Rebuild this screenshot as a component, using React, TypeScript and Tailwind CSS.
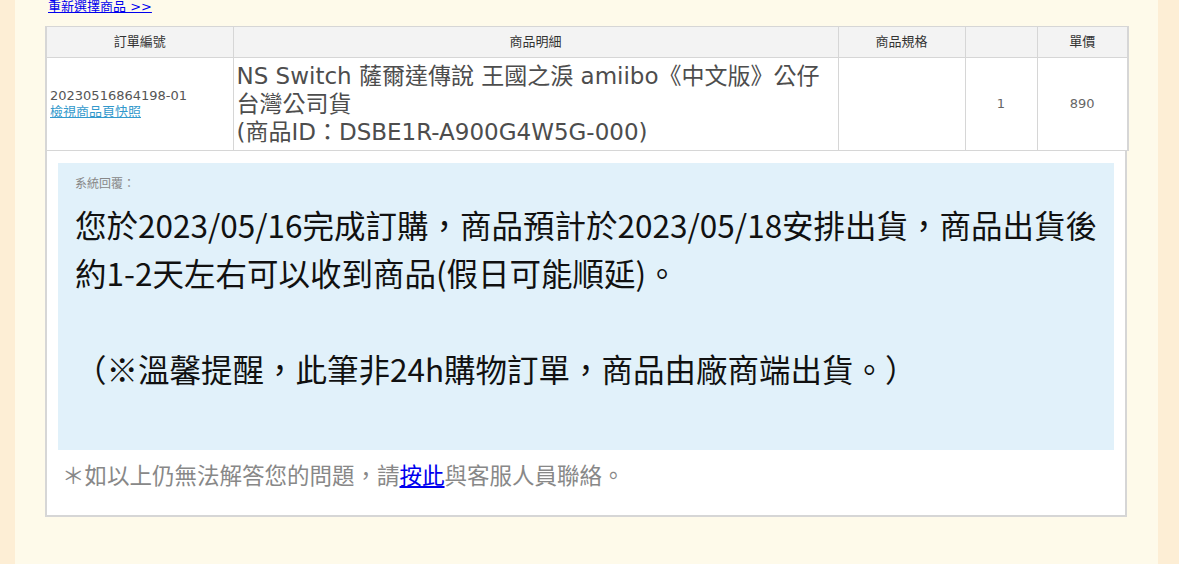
export default function App() {
  const cjk = '"DejaVu Sans", "Noto Sans CJK TC", sans-serif';
  return (
    <div className="flex min-h-[564px] w-[1179px] overflow-hidden bg-[#fdeed5]">
      <div className="ml-[15px] w-[1143px] bg-[#fefaea] pl-[30px]" style={{ fontFamily: cjk }}>
        <a href="#" className="mt-[-1px] ml-[3px] block text-[13px] leading-[16px] text-[#0000ee] underline">
          重新選擇商品 &gt;&gt;
        </a>

        <table className="mt-[11px] w-[1082px] table-fixed border-collapse border-x-2 border-[#d6d6d6] text-[13px]">
          <colgroup>
            <col className="w-[187px]" />
            <col className="w-[605px]" />
            <col className="w-[127px]" />
            <col className="w-[72px]" />
            <col className="w-[91px]" />
          </colgroup>
          <thead>
            <tr className="h-[31px] bg-[#f3f3f3] text-[#333]">
              <th className="border border-[#d6d6d6] font-normal">訂單編號</th>
              <th className="border border-[#d6d6d6] font-normal">商品明細</th>
              <th className="border border-[#d6d6d6] font-normal">商品規格</th>
              <th className="border border-[#d6d6d6] font-normal"></th>
              <th className="border border-[#d6d6d6] font-normal">單價</th>
            </tr>
          </thead>
          <tbody className="bg-white">
            <tr className="h-[93px]">
              <td className="border border-[#d6d6d6] px-[3px] align-middle leading-[16px] text-[#555]">
                <div>20230516864198-01</div>
                <a href="#" className="text-[#3399cc] underline">檢視商品頁快照</a>
              </td>
              <td className="border border-[#d6d6d6] px-[3px] align-middle text-[23px] leading-[28px] text-[#4d4d4d]">
                NS Switch 薩爾達傳說 王國之淚 amiibo《中文版》公仔
                <br />
                台灣公司貨
                <br />
                (商品ID：DSBE1R-A900G4W5G-000)
              </td>
              <td className="border border-[#d6d6d6]"></td>
              <td className="border border-[#d6d6d6] text-center text-[#666]">1</td>
              <td className="border border-[#d6d6d6] text-center text-[#666]">890</td>
            </tr>
          </tbody>
        </table>

        <div className="w-[1082px] border-x-2 border-b-2 border-[#d6d6d6] bg-white px-[11px] pt-[12px] pb-[25px]">
          <div className="bg-[#e1f1fa] pl-[17px] pt-[14px] pb-[58px]">
            <div className="text-[12px] leading-[14px] text-[#888]">系統回覆：</div>
            <div
              className="mt-[9px] text-[31.5px] leading-[48px] text-[#111]"
              style={{ fontFamily: '"Noto Sans CJK TC", sans-serif' }}
            >
              您於2023/05/16完成訂購，商品預計於2023/05/18安排出貨，商品出貨後
              <br />
              約1-2天左右可以收到商品(假日可能順延)。
              <br />
              <br />
              （※溫馨提醒，此筆非24h購物訂單，商品由廠商端出貨。）
            </div>
          </div>
          <div
            className="mt-[8px] pl-[4px] text-[22.5px] leading-[32px] text-[#888]"
            style={{ fontFamily: '"Noto Sans CJK TC", sans-serif' }}
          >
            ＊如以上仍無法解答您的問題，請<a href="#" className="text-[#0000ee] underline">按此</a>與客服人員聯絡。
          </div>
        </div>
      </div>
    </div>
  );
}
